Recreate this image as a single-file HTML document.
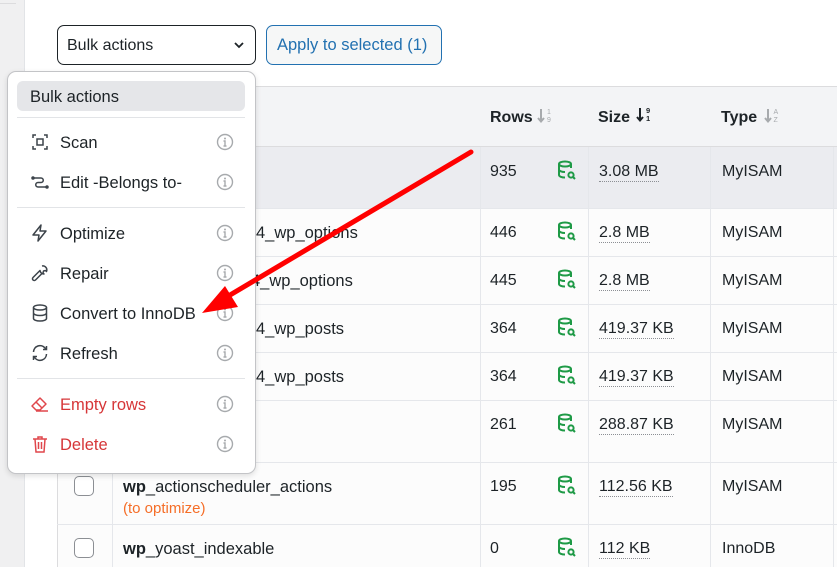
<!DOCTYPE html>
<html><head><style>
*{box-sizing:border-box;margin:0;padding:0}
body{width:837px;height:567px;overflow:hidden;background:#fff;font-family:"Liberation Sans",sans-serif;font-size:16px;color:#1d2327;position:relative}
.a{position:absolute}
.t{position:absolute;white-space:nowrap;line-height:20px;margin-top:2px}
.hl{position:absolute;left:57px;width:780px;height:1px;background:#e5e7eb}
.vl{position:absolute;width:1px;background:#e5e7eb}
.cb{position:absolute;left:74px;width:20px;height:20px;border:1.5px solid #8c8f94;border-radius:5px;background:#fff}
.sz{border-bottom:1px dotted #8c8f94;line-height:18px}
.mi{position:absolute;left:17px;width:228px;height:30px}
.mi .ic{position:absolute;left:13px;top:5px;width:20px;height:20px}
.mi span{position:absolute;left:43px;top:6px;line-height:20px}
.mi .in{position:absolute;left:199px;top:6px;width:18px;height:18px}
.sep{position:absolute;left:17px;width:228px;height:1px;background:#e2e4e7}
.so{position:absolute}
</style></head><body>
<div class="a" style="left:0;top:0;width:25px;height:567px;background:#f0f0f1;border-right:1px solid #e2e4e7"></div>
<div class="a" style="left:0;top:3px;width:16px;height:1px;background:#dcdcde"></div>

<div class="a" style="left:57px;top:25px;width:199px;height:40px;border:1.3px solid #1d2327;border-radius:7px"></div>
<div class="t" style="left:67px;top:34px">Bulk actions</div>
<svg class="a" style="left:233px;top:40px" width="12" height="10" viewBox="0 0 12 10"><path d="M2 3l4 4 4-4" fill="none" stroke="#1d2327" stroke-width="1.8"/></svg>
<div class="a" style="left:266px;top:25px;width:176px;height:40px;border:1.3px solid #2271b1;border-radius:7px;background:#f6f7f7"></div>
<div class="t" style="left:277px;top:33px;color:#2271b1;font-size:16.5px">Apply to selected (1)</div>

<div class="a" style="left:57px;top:86px;width:780px;height:61px;background:#f3f4f6;border-top:1px solid #dcdcde;border-bottom:1px solid #dcdcde"></div>
<div class="a" style="left:57px;top:147px;width:780px;height:420px;background:#fcfcfc"></div>
<div class="a" style="left:57px;top:147px;width:780px;height:61px;background:#ebecf0"></div>
<div class="vl" style="left:57px;top:86px;height:481px;background:#dcdcde"></div>
<div class="vl" style="left:112px;top:147px;height:420px"></div>
<div class="vl" style="left:480px;top:147px;height:420px"></div>
<div class="vl" style="left:588px;top:147px;height:420px"></div>
<div class="vl" style="left:710px;top:147px;height:420px"></div>
<div class="vl" style="left:833px;top:147px;height:420px"></div>
<div class="hl" style="top:208px"></div><div class="hl" style="top:256px"></div><div class="hl" style="top:304px"></div><div class="hl" style="top:352px"></div><div class="hl" style="top:400px"></div><div class="hl" style="top:462px"></div><div class="hl" style="top:524px"></div>

<div class="t" style="left:490px;top:106px;font-weight:bold">Rows</div>
<svg class="so" style="left:537px;top:108px" width="16" height="16" viewBox="0 0 16 16"><path d="M4 1v12M1 10l3 3.5 3-3.5" fill="none" stroke="#a7aaad" stroke-width="2"/><text x="10" y="6" font-size="7" fill="#a7aaad" font-family="Liberation Sans">1</text><text x="10" y="14" font-size="7" fill="#a7aaad" font-family="Liberation Sans">9</text></svg>
<div class="t" style="left:598px;top:106px;font-weight:bold">Size</div>
<svg class="so" style="left:636px;top:107px" width="16" height="16" viewBox="0 0 16 16"><path d="M4 1v12M1 10l3 3.5 3-3.5" fill="none" stroke="#1d2327" stroke-width="2"/><text x="10" y="6" font-size="7.5" font-weight="bold" fill="#1d2327" font-family="Liberation Sans">9</text><text x="10" y="14" font-size="7.5" font-weight="bold" fill="#1d2327" font-family="Liberation Sans">1</text></svg>
<div class="t" style="left:721px;top:106px;font-weight:bold">Type</div>
<svg class="so" style="left:764px;top:108px" width="16" height="16" viewBox="0 0 16 16"><path d="M4 1v12M1 10l3 3.5 3-3.5" fill="none" stroke="#a7aaad" stroke-width="2"/><text x="9.5" y="6" font-size="7" fill="#a7aaad" font-family="Liberation Sans">A</text><text x="9.5" y="14" font-size="7" fill="#a7aaad" font-family="Liberation Sans">Z</text></svg>

<div class="t" style="left:490px;top:160px">935</div><div class="t sz" style="left:599px;top:161px">3.08 MB</div><div class="t" style="left:722px;top:160px">MyISAM</div>
<div class="t" style="left:490px;top:221px">446</div><div class="t sz" style="left:599px;top:222px">2.8 MB</div><div class="t" style="left:722px;top:221px">MyISAM</div>
<div class="t" style="left:490px;top:269px">445</div><div class="t sz" style="left:599px;top:270px">2.8 MB</div><div class="t" style="left:722px;top:269px">MyISAM</div>
<div class="t" style="left:490px;top:317px">364</div><div class="t sz" style="left:599px;top:318px">419.37 KB</div><div class="t" style="left:722px;top:317px">MyISAM</div>
<div class="t" style="left:490px;top:365px">364</div><div class="t sz" style="left:599px;top:366px">419.37 KB</div><div class="t" style="left:722px;top:365px">MyISAM</div>
<div class="t" style="left:490px;top:413px">261</div><div class="t sz" style="left:599px;top:414px">288.87 KB</div><div class="t" style="left:722px;top:413px">MyISAM</div>
<div class="t" style="left:490px;top:475px">195</div><div class="t sz" style="left:599px;top:476px">112.56 KB</div><div class="t" style="left:722px;top:475px">MyISAM</div>
<div class="t" style="left:490px;top:537px">0</div><div class="t sz" style="left:599px;top:538px">112 KB</div><div class="t" style="left:722px;top:537px">InnoDB</div>

<svg width="0" height="0" style="position:absolute"><defs><g id="db"><ellipse cx="8" cy="4" rx="6" ry="2.5" fill="none" stroke="#1e9a46" stroke-width="2"/><path d="M2 4v11c0 1.4 2.7 2.5 6 2.5M14 4v4M2 9.5c0 1.4 2.7 2.5 6 2.5" fill="none" stroke="#1e9a46" stroke-width="2"/><circle cx="14" cy="15" r="2.6" fill="none" stroke="#1e9a46" stroke-width="2"/><path d="M16 17l2 2" stroke="#1e9a46" stroke-width="2"/></g></defs></svg>
<svg class="a" style="left:557px;top:160px" width="20" height="21"><use href="#db"/></svg>
<svg class="a" style="left:557px;top:221px" width="20" height="21"><use href="#db"/></svg>
<svg class="a" style="left:557px;top:269px" width="20" height="21"><use href="#db"/></svg>
<svg class="a" style="left:557px;top:317px" width="20" height="21"><use href="#db"/></svg>
<svg class="a" style="left:557px;top:365px" width="20" height="21"><use href="#db"/></svg>
<svg class="a" style="left:557px;top:413px" width="20" height="21"><use href="#db"/></svg>
<svg class="a" style="left:557px;top:475px" width="20" height="21"><use href="#db"/></svg>
<svg class="a" style="left:557px;top:537px" width="20" height="21"><use href="#db"/></svg>

<div class="t" style="left:256px;top:221px;font-size:16.5px">4_wp_options</div>
<div class="t" style="left:251px;top:269px;font-size:16.5px">4_wp_options</div>
<div class="t" style="left:256px;top:317px;font-size:16.5px">4_wp_posts</div>
<div class="t" style="left:256px;top:365px;font-size:16.5px">4_wp_posts</div>
<div class="cb" style="top:476px"></div>
<div class="t" style="left:123px;top:475px;font-size:16.5px"><b>wp</b>_actionscheduler_actions</div>
<div class="t" style="left:123px;top:497px;color:#f56e28;font-size:15px">(to optimize)</div>
<div class="cb" style="top:538px"></div>
<div class="t" style="left:123px;top:537px;font-size:16.5px"><b>wp</b>_yoast_indexable</div>

<div class="a" style="left:7px;top:71px;width:249px;height:403px;background:#fff;border:1px solid #c3c4c7;border-radius:9px;box-shadow:0 2px 6px rgba(0,0,0,.12)"></div>
<div class="a" style="left:17px;top:81px;width:228px;height:30px;background:#e5e6e9;border-radius:6px"></div>
<div class="t" style="left:30px;top:85px;font-size:16.5px">Bulk actions</div>
<div class="sep" style="top:117px"></div><div class="sep" style="top:207px"></div><div class="sep" style="top:378px"></div>

<svg width="0" height="0" style="position:absolute"><defs><g id="inf"><circle cx="9" cy="9" r="7.5" fill="none" stroke="#a7aaad" stroke-width="1.4"/><circle cx="9" cy="5.5" r="1" fill="#a7aaad"/><path d="M7.5 8h1.5v5M7.5 13h3" fill="none" stroke="#a7aaad" stroke-width="1.4"/></g></defs></svg>

<div class="mi" style="top:127px"><svg class="ic" viewBox="0 0 20 20" fill="none" stroke="#3c434a" stroke-width="1.5"><path d="M3 6V3h3M14 3h3v3M17 14v3h-3M6 17H3v-3"/><rect x="7" y="7" width="6" height="6"/></svg><span style="font-size:16.5px">Scan</span><svg class="in"><use href="#inf"/></svg></div>
<div class="mi" style="top:167px"><svg class="ic" viewBox="0 0 20 20" fill="none" stroke="#3c434a" stroke-width="1.5"><circle cx="3" cy="6" r="1" fill="#3c434a"/><circle cx="17" cy="15" r="1" fill="#3c434a"/><path d="M4 6h7a2 2 0 010 4.5H8a2 2 0 000 4.5h8"/></svg><span style="font-size:16.5px">Edit -Belongs to-</span><svg class="in"><use href="#inf"/></svg></div>
<div class="mi" style="top:218px"><svg class="ic" viewBox="0 0 20 20" fill="none" stroke="#3c434a" stroke-width="1.5" stroke-linejoin="round"><path d="M11 2L3 12h6l-1 6 8-10h-6z"/></svg><span style="font-size:16.5px">Optimize</span><svg class="in"><use href="#inf"/></svg></div>
<div class="mi" style="top:258px"><svg class="ic" viewBox="0 0 20 20" fill="none" stroke="#3c434a" stroke-width="1.5" stroke-linejoin="round"><path d="M12 3a4 4 0 014.5 5.5l-1-1-2 .5-.5 2 1 1A4 4 0 0110 7.5L3 14.5a1.5 1.5 0 002.5 2.5l7-7"/></svg><span style="font-size:16.5px">Repair</span><svg class="in"><use href="#inf"/></svg></div>
<div class="mi" style="top:298px"><svg class="ic" viewBox="0 0 20 20" fill="none" stroke="#3c434a" stroke-width="1.5"><ellipse cx="10" cy="4.5" rx="6.5" ry="2.5"/><path d="M3.5 4.5v11c0 1.4 2.9 2.5 6.5 2.5s6.5-1.1 6.5-2.5v-11M3.5 10c0 1.4 2.9 2.5 6.5 2.5s6.5-1.1 6.5-2.5"/></svg><span style="font-size:16.5px">Convert to InnoDB</span><svg class="in"><use href="#inf"/></svg></div>
<div class="mi" style="top:338px"><svg class="ic" viewBox="0 0 20 20" fill="none" stroke="#3c434a" stroke-width="1.5"><path d="M3.5 9A6.5 6.5 0 0115 5l1.5 1.5M16.5 3v3.5H13M16.5 11A6.5 6.5 0 015 15l-1.5-1.5M3.5 17v-3.5H7"/></svg><span style="font-size:16.5px">Refresh</span><svg class="in"><use href="#inf"/></svg></div>
<div class="mi" style="top:389px"><svg class="ic" viewBox="0 0 20 20" fill="none" stroke="#e0474c" stroke-width="1.5" stroke-linejoin="round"><path d="M2 12l8-8 6 6-6 6H6zM6 8l6 6M6 17h12"/></svg><span style="color:#d63638;font-size:16.5px">Empty rows</span><svg class="in"><use href="#inf"/></svg></div>
<div class="mi" style="top:429px"><svg class="ic" viewBox="0 0 20 20" fill="none" stroke="#e0474c" stroke-width="1.5"><path d="M3 5h14M8 5V3h4v2M5 5l1 13h8l1-13M8.5 8v7M11.5 8v7"/></svg><span style="color:#d63638;font-size:16.5px">Delete</span><svg class="in"><use href="#inf"/></svg></div>

<svg class="a" style="left:0;top:0" width="837" height="567"><path d="M471 152L225 298" stroke="#f00" stroke-width="5" stroke-linecap="round"/><path d="M202 313L225 286L238 307Z" fill="#f00"/></svg>
</body></html>
